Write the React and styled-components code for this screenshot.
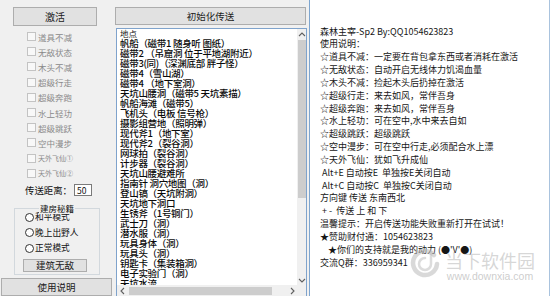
import React from 'react';
import styled, { createGlobalStyle } from 'styled-components';

const Global = createGlobalStyle`
  html, body { margin: 0; padding: 0; background: #f0f0f0; overflow: hidden; }
  body { font-family: "Noto Sans CJK SC", "Noto Sans", sans-serif; }
  * { box-sizing: border-box; }
`;

const Window = styled.div`
  position: relative;
  display: flex;
  width: 550px;
  height: 296px;
  overflow: hidden;
  background: #f0f0f0;
`;

const LeftCol = styled.div`
  width: 115px;
  flex: none;
  display: flex;
  flex-direction: column;
  padding-top: 7px;
`;

const Button = styled.button`
  display: block;
  flex: none;
  margin: ${p => p.$margin || '0'};
  width: ${p => p.$w}px;
  height: ${p => p.$h}px;
  padding: 0;
  background: #e1e1e1;
  border: 1px solid #adadad;
  font-family: "Noto Sans CJK SC", sans-serif;
  font-size: ${p => p.$size || 10}px;
  line-height: ${p => p.$h - 2}px;
  color: #1b1b1b;
  text-align: center;
`;

const CheckList = styled.div`
  margin-top: 3px;
  display: flex;
  flex-direction: column;
`;

const CheckRow = styled.div`
  display: flex;
  align-items: center;
  height: 15.2px;
  width: 74px;
  padding-left: 27px;
  overflow: hidden;
`;

const CheckBox = styled.span`
  flex: none;
  width: 9px;
  height: 9px;
  border: 1px solid #c3c3c3;
  background: #f8f8f8;
  margin-right: 2px;
`;

const CheckLabel = styled.span`
  white-space: nowrap;
  font-size: ${p => p.$size || 8.5}px;
  line-height: 10px;
  color: #8a8a8a;
`;

const DistanceRow = styled.div`
  display: flex;
  align-items: center;
  height: 12px;
  margin-top: 3px;
  padding-left: 25px;
`;

const DistanceLabel = styled.span`
  font-size: 9.4px;
  line-height: 12px;
  color: #111;
  white-space: nowrap;
  width: 49px;
`;

const NumberBox = styled.span`
  display: block;
  width: 18px;
  height: 12px;
  border: 1px solid #7a7a7a;
  background: #fff;
  font-size: 8.5px;
  line-height: 10px;
  padding-left: 2px;
  color: #111;
`;

const Group = styled.div`
  position: relative;
  margin: 12px 0 0 14px;
  width: 86px;
  height: 70px;
  border: 1px solid #d2d8dd;
  padding-top: 0.5px;
`;

const Legend = styled.span`
  position: absolute;
  top: -7px;
  left: 24px;
  padding: 0 1px;
  background: #f0f0f0;
  font-size: 8.5px;
  line-height: 12px;
  color: #111;
  white-space: nowrap;
`;

const RadioRow = styled.div`
  display: flex;
  align-items: center;
  height: 15.5px;
  padding-left: 10px;
`;

const Radio = styled.span`
  flex: none;
  width: 9px;
  height: 9px;
  border: 1px solid #333;
  border-radius: 50%;
  background: #fff;
  margin-right: 1px;
`;

const RadioLabel = styled.span`
  font-size: 8.7px;
  line-height: 10px;
  color: #111;
  white-space: nowrap;
`;

const MidCol = styled.div`
  width: 192px;
  flex: none;
  display: flex;
  flex-direction: column;
  padding-top: 7px;
`;

const ListBox = styled.div`
  margin: 3px 0 0 1px;
  width: 191px;
  height: 269px;
  flex: none;
  border: 1px solid #7fa3cc;
  background: #fff;
  display: grid;
  grid-template-columns: 1fr 9px;
  grid-template-rows: 1fr 11px;
  overflow: hidden;
`;

const ListContent = styled.div`
  overflow: hidden;
  padding-left: 3px;
`;

const ListHeader = styled.div`
  height: 9px;
  font-size: 8.5px;
  line-height: 9px;
  color: #222;
`;

const ListItem = styled.div`
  height: 10px;
  font-size: 9.5px;
  line-height: 10px;
  letter-spacing: -0.3px;
  font-weight: 500;
  color: #0a0a0a;
  white-space: nowrap;
`;

const VScroll = styled.div`
  display: flex;
  flex-direction: column;
  background: #f0f0f0;
`;

const ArrowCell = styled.div`
  flex: none;
  height: ${p => p.$h || 10}px;
  width: ${p => p.$w || 9}px;
  display: flex;
  align-items: center;
  justify-content: center;
`;

const VThumb = styled.div`
  flex: none;
  height: 158px;
  margin: 0 0 0 1px;
  background: #cdcdcd;
`;

const Spacer = styled.div`
  flex: 1;
`;

const HScroll = styled.div`
  display: flex;
  align-items: center;
  background: #f0f0f0;
`;

const HThumb = styled.div`
  flex: none;
  width: 143px;
  height: 8px;
  margin-left: 2px;
  background: #cdcdcd;
`;

const Corner = styled.div`
  background: #f0f0f0;
`;

const TextPanel = styled.div`
  position: relative;
  flex: none;
  margin-left: 2px;
  width: 241px;
  height: 300px;
  background: #fff;
  border-left: 1px solid #7da5cf;
  border-right: 1px solid #a9c3de;
  padding: 25.5px 0 0 10px;
  overflow: hidden;
`;

const TextLine = styled.div`
  height: 12.85px;
  font-size: 9px;
  line-height: 12.85px;
  color: #161616;
  white-space: pre;
`;

const Watermark = styled.div`
  position: absolute;
  left: 100px;
  top: 249px;
  display: flex;
  align-items: flex-start;
  gap: 5px;
  pointer-events: none;
`;

const WmText = styled.div`
  display: flex;
  flex-direction: column;
  align-items: center;
`;

const WmTitle = styled.span`
  font-size: 18px;
  line-height: 22px;
  color: rgba(180, 180, 180, 0.55);
  font-weight: 400;
`;

const WmUrl = styled.span`
  font-family: "Liberation Sans", Arial, sans-serif;
  font-size: 10.5px;
  line-height: 10px;
  color: rgba(170, 170, 170, 0.6);
`;

const Chevron = ({ dir }) => {
  const d = {
    up: 'M1 5 L4 2 L7 5',
    down: 'M1 2 L4 5 L7 2',
    left: 'M5 1 L2 4 L5 7',
    right: 'M2 1 L5 4 L2 7',
  }[dir];
  const vertical = dir === 'up' || dir === 'down';
  return (
    <svg width={vertical ? 8 : 7} height={vertical ? 7 : 8} viewBox={vertical ? '0 0 8 7' : '0 0 7 8'}>
      <path d={d} fill="none" stroke="#606060" strokeWidth="1.1" />
    </svg>
  );
};

const Logo = () => (
  <svg width="30" height="30" viewBox="0 0 30 30">
    <path d="M24 6 A12 12 0 1 0 27 15" fill="none" stroke="rgba(185,185,185,0.55)" strokeWidth="4.5" strokeLinecap="round" />
    <path d="M15 9 A6 6 0 1 0 21 15 L21 3" fill="none" stroke="rgba(185,185,185,0.5)" strokeWidth="2.5" strokeLinecap="round" />
  </svg>
);

const checks = [
  ['道具不减'], ['无敌状态'], ['木头不减'], ['超级行走'], ['超级奔跑'],
  ['水上轻功'], ['超级跳跃'], ['空中漫步'], ['天外飞仙①', 7], ['天外飞仙②', 7],
];

const modes = ['和平模式', '晚上出野人', '正常模式'];

const places = [
  '帆船（磁带1 随身听 图纸）',
  '磁带2 （吊窟洞 位于平地湖附近）',
  '磁带3(同)（深渊底部 胖子怪）',
  '磁带4（雪山湖）',
  '磁带4 （地下室洞）',
  '天坑山腰洞（磁带5 天坑素描）',
  '帆船海滩（磁带5）',
  '飞机头（电板 信号枪）',
  '摄影组营地（照明弹）',
  '现代斧1（地下室）',
  '现代斧2（裂谷洞）',
  '网球拍（裂谷洞）',
  '计步器（裂谷洞）',
  '天坑山腰避难所',
  '指南针 洞穴地图（洞）',
  '登山镐（天坑附洞）',
  '天坑地下洞口',
  '生锈斧（1号铜门）',
  '武士刀（洞）',
  '潜水服（洞）',
  '玩具身体（洞）',
  '玩具头（洞）',
  '钥匙卡（集装箱洞）',
  '电子实验门（洞）',
  '天坑水流',
];

const notes = [
  '森林主宰-Sp2 By:QQ1054623823',
  '使用说明：',
  '☆道具不减：一定要在背包拿东西或者消耗在激活',
  '☆无敌状态：自动开启无线体力饥渴血量',
  '☆木头不减：捡起木头后扔掉在激活',
  '☆超级行走：来去如风，常伴吾身',
  '☆超级奔跑：来去如风，常伴吾身',
  '☆水上轻功：可在空中,水中来去自如',
  '☆超级跳跃：超级跳跃',
  '☆空中漫步：可在空中行走,必须配合水上漂',
  '☆天外飞仙：犹如飞升成仙',
  ' Alt+E 自动按E  单独按E关闭自动',
  ' Alt+C 自动按C  单独按C关闭自动',
  '方向键 传送 东南西北',
  ' + -  传送 上 和 下',
  '温馨提示：开启传送功能失败重新打开在试试！',
  '★赞助财付通：1054623823',
  '    ★你们的支持就是我的动力 (●\'V\'●)',
  '交流Q群：336959341',
];

export default function App() {
  return (
    <>
      <Global />
      <Window>
        <LeftCol>
          <Button $margin="0 0 0 13px" $w={84} $h={19}>激活</Button>
          <CheckList>
            {checks.map(([label, size]) => (
              <CheckRow key={label}>
                <CheckBox />
                <CheckLabel $size={size}>{label}</CheckLabel>
              </CheckRow>
            ))}
          </CheckList>
          <DistanceRow>
            <DistanceLabel>传送距离：</DistanceLabel>
            <NumberBox>50</NumberBox>
          </DistanceRow>
          <Group>
            <Legend>建房秘籍</Legend>
            {modes.map(m => (
              <RadioRow key={m}>
                <Radio />
                <RadioLabel>{m}</RadioLabel>
              </RadioRow>
            ))}
            <Button $margin="3.5px 0 0 8px" $w={64} $h={13} $size={9.5}>建筑无敌</Button>
          </Group>
          <Button $margin="3px 0 0 1px" $w={111} $h={18} $size={9.5}>使用说明</Button>
        </LeftCol>

        <MidCol>
          <Button $w={191} $h={18} $size={9.5}>初始化传送</Button>
          <ListBox>
            <ListContent>
              <ListHeader>地点</ListHeader>
              {places.map((p, i) => (
                <ListItem key={i}>{p}</ListItem>
              ))}
            </ListContent>
            <VScroll>
              <ArrowCell $h={11}><Chevron dir="up" /></ArrowCell>
              <VThumb />
              <Spacer />
              <ArrowCell $h={10}><Chevron dir="down" /></ArrowCell>
            </VScroll>
            <HScroll>
              <ArrowCell $w={10} $h={11}><Chevron dir="left" /></ArrowCell>
              <HThumb />
              <Spacer />
              <ArrowCell $w={10} $h={11}><Chevron dir="right" /></ArrowCell>
            </HScroll>
            <Corner />
          </ListBox>
        </MidCol>

        <TextPanel>
          {notes.map((n, i) => (
            <TextLine key={i}>{n}</TextLine>
          ))}
          <Watermark>
            <Logo />
            <WmText>
              <WmTitle>当下软件园</WmTitle>
              <WmUrl>www.downxia.com</WmUrl>
            </WmText>
          </Watermark>
        </TextPanel>
      </Window>
    </>
  );
}
